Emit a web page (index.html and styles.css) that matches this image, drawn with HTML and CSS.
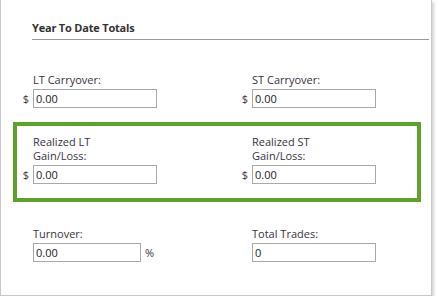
FILE: index.html
```html
<!DOCTYPE html>
<html lang="en">
<head>
    <meta charset="UTF-8">
    <title>Year To Date Totals</title>
    <link rel="stylesheet" href="styles.css">
</head>
<body>
    <div class="panel">
        <div class="heading">Year To Date Totals</div>

        <div class="group">
            <div class="field">
                <label>LT Carryover:</label>
                <div class="line"><span class="unit">$</span><input type="text" value="0.00"></div>
            </div>
            <div class="field">
                <label>ST Carryover:</label>
                <div class="line"><span class="unit">$</span><input type="text" value="0.00"></div>
            </div>
        </div>

        <div class="group highlight">
            <div class="field">
                <label>Realized LT<br>Gain/Loss:</label>
                <div class="line"><span class="unit">$</span><input type="text" value="0.00"></div>
            </div>
            <div class="field">
                <label>Realized ST<br>Gain/Loss:</label>
                <div class="line"><span class="unit">$</span><input type="text" value="0.00"></div>
            </div>
        </div>

        <div class="group last">
            <div class="field">
                <label>Turnover:</label>
                <div class="line"><span class="unit"></span><input type="text" class="short" value="0.00"><span class="suffix">%</span></div>
            </div>
            <div class="field">
                <label>Total Trades:</label>
                <div class="line"><span class="unit"></span><input type="text" value="0"></div>
            </div>
        </div>
    </div>
</body>
</html>
```

FILE: styles.css
```css
body {
    margin: 0;
    padding: 0;
    background-color: #fff;
    font-family: "Open Sans", Arial, sans-serif;
    font-size: 11px;
    line-height: 14px;
    color: #3a3242;
}
.panel {
    width: 430px;
    border: 1px solid #c8c8c8;
    border-top: none;
    padding: 21px 0 29px 0;
    background-color: #fff;
    box-shadow: 2px 2px 3px rgba(0, 0, 0, 0.18);
}
.heading {
    margin: 0 2px 0 31px;
    padding-bottom: 4px;
    border-bottom: 1px solid #999;
    font-size: 11px;
    font-weight: bold;
    letter-spacing: -0.2px;
    color: #333;
}
.group {
    display: grid;
    grid-template-columns: 219px 1fr;
    width: 395px;
    margin: 29px 0 0 12px;
    padding-left: 5px;
    border: 4px solid transparent;
}
.group.highlight {
    margin-top: 10px;
    padding-top: 9px;
    padding-bottom: 14px;
    border-color: #5fa22a;
}
.group.last {
    margin-top: 21px;
}
.field label {
    display: block;
    margin: 0 0 2px 11px;
}
.line {
    display: flex;
    align-items: center;
}
.unit {
    width: 11px;
    padding-right: 4px;
    text-align: right;
    box-sizing: border-box;
}
input {
    width: 124px;
    height: 19px;
    box-sizing: border-box;
    margin: 0;
    padding: 0 2px;
    border: 1px solid #a9a9a9;
    font-family: "Open Sans", Arial, sans-serif;
    font-size: 11px;
    color: #1c1c28;
    background-color: #fff;
}
input.short {
    width: 108px;
}
.suffix {
    margin-left: 4px;
}
```
